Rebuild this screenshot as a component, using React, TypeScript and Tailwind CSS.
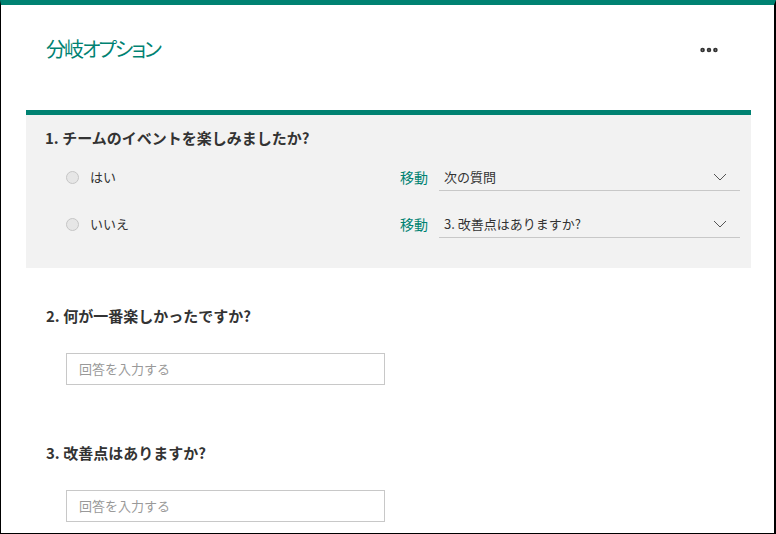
import { MoreHorizontal } from 'lucide-react';

const font = "font-['Segoe_UI','Noto_Sans_CJK_JP',sans-serif]";

const branches = [
  { label: 'はい', target: '次の質問' },
  { label: 'いいえ', target: '3. 改善点はありますか?' },
];

function Chevron() {
  return (
    <svg width="14" height="8" viewBox="0 0 14 8" className="text-[#555]">
      <polyline points="1,1 7,7 13,1" fill="none" stroke="currentColor" strokeWidth="1" />
    </svg>
  );
}

function TextQuestion({ title }: { title: string }) {
  return (
    <div className="pl-[45px]">
      <h3 className="text-[15px] leading-[22px] font-bold text-[#333]">{title}</h3>
      <div className="mt-[26px] ml-[20px] flex h-[32px] w-[319px] items-center border border-[#c8c8c8] bg-white pl-[12px] text-[13px] text-[#999]">
        回答を入力する
      </div>
    </div>
  );
}

export default function App() {
  return (
    <div
      className={`${font} h-[534px] w-[776px] overflow-hidden border-t-[5px] border-r-[2px] border-b border-l border-t-[#008272] border-r-black border-b-black border-l-black bg-white`}
    >
      {/* Header */}
      <div className="flex h-[105px] items-start justify-between pt-[30px] pr-[54px] pl-[45px]">
        <h1 className="text-[20px] leading-[28px] font-normal tracking-[-2px] text-[#008272] [font-feature-settings:'palt']">
          分岐オプション
        </h1>
        <MoreHorizontal size={22} strokeWidth={3} className="mt-[4px] text-[#333]" />
      </div>

      {/* Branching question */}
      <div className="mr-[23px] ml-[25px] border-t-[5px] border-t-[#008272] bg-[#f2f2f2] pt-[12px] pr-[11px] pb-[29px] pl-[19px]">
        <h3 className="text-[15px] leading-[22px] font-bold text-[#333]">1. チームのイベントを楽しみましたか?</h3>
        <div className="mt-[13px] flex flex-col gap-[17px]">
          {branches.map((b) => (
            <div key={b.label} className="flex h-[30px] items-center">
              <div className="ml-[21px] h-[13px] w-[13px] rounded-full border border-[#c6c6c6] bg-[#e6e6e6]" />
              <span className="ml-[11px] text-[13px] text-[#333]">{b.label}</span>
              <span className="mr-[11px] ml-auto text-[14px] text-[#008272]">移動</span>
              <div className="flex h-[28px] w-[301px] items-center justify-between border-b border-[#c8c8c8] pr-[13px] pl-[5px] text-[13px] text-[#333]">
                <span>{b.target}</span>
                <Chevron />
              </div>
            </div>
          ))}
        </div>
      </div>

      <div className="mt-[37px]">
        <TextQuestion title="2. 何が一番楽しかったですか?" />
      </div>
      <div className="mt-[57px]">
        <TextQuestion title="3. 改善点はありますか?" />
      </div>
    </div>
  );
}
